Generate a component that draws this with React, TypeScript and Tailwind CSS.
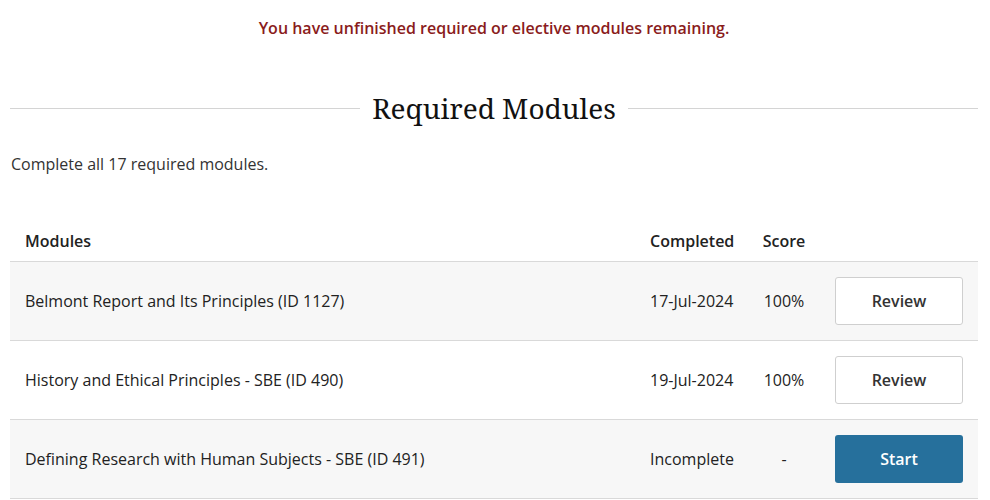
import { Fragment } from 'react';

const modules = [
  { name: 'Belmont Report and Its Principles (ID 1127)', completed: '17-Jul-2024', score: '100%', action: 'Review' },
  { name: 'History and Ethical Principles - SBE (ID 490)', completed: '19-Jul-2024', score: '100%', action: 'Review' },
  { name: 'Defining Research with Human Subjects - SBE (ID 491)', completed: 'Incomplete', score: '-', action: 'Start' },
];

export default function App() {
  return (
    <div className="min-h-screen bg-white pl-[10px] pr-[12px] pt-[16px] text-[#222] font-['Open_Sans',sans-serif] text-[16px]">
      <p className="text-center font-semibold text-[#8a1c1c] leading-[24px]">
        You have unfinished required or elective modules remaining.
      </p>

      <div className="mt-[48px] flex items-center gap-[12px]">
        <div className="h-px flex-1 bg-[#d4d4d4]" />
        <h2 className="font-['Noto_Serif','DejaVu_Serif',serif] text-[28px] leading-[40px] text-[#111]">
          Required Modules
        </h2>
        <div className="h-px flex-1 bg-[#d4d4d4]" />
      </div>

      <p className="mt-[24px] pl-px leading-[24px] text-[#333]">Complete all 17 required modules.</p>

      <div className="mt-[53px] grid grid-cols-[1fr_113px_72px_158px]">
        <div className="border-b border-[#d9d9d9] px-[15px] pb-[8px] font-semibold leading-[24px]">Modules</div>
        <div className="whitespace-nowrap border-b border-[#d9d9d9] px-[15px] pb-[8px] font-semibold leading-[24px]">Completed</div>
        <div className="border-b border-[#d9d9d9] pb-[8px] text-center font-semibold leading-[24px]">Score</div>
        <div className="border-b border-[#d9d9d9] pb-[8px]" />

        {modules.map((m, i) => {
          const bg = i % 2 === 0 ? 'bg-[#f7f7f7]' : 'bg-white';
          return (
            <Fragment key={m.name}>
              <div className={`${bg} flex h-[79px] items-center border-b border-[#d9d9d9] px-[15px]`}>{m.name}</div>
              <div className={`${bg} flex h-[79px] items-center whitespace-nowrap border-b border-[#d9d9d9] px-[15px]`}>{m.completed}</div>
              <div className={`${bg} flex h-[79px] items-center justify-center border-b border-[#d9d9d9]`}>{m.score}</div>
              <div className={`${bg} flex h-[79px] items-center border-b border-[#d9d9d9] px-[15px]`}>
                {m.action === 'Start' ? (
                  <button className="h-[48px] w-[128px] rounded-[3px] bg-[#26709c] font-semibold text-white">Start</button>
                ) : (
                  <button className="h-[48px] w-[128px] rounded-[3px] border border-[#cfcfcf] bg-white font-semibold text-[#333]">
                    Review
                  </button>
                )}
              </div>
            </Fragment>
          );
        })}
      </div>
    </div>
  );
}
